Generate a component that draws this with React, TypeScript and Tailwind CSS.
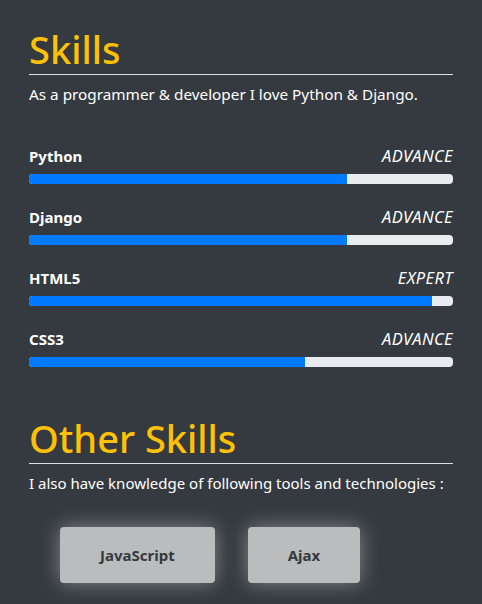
const SKILLS: { name: string; level: string; pct: number }[] = [
    { name: 'Python', level: 'ADVANCE', pct: 75 },
    { name: 'Django', level: 'ADVANCE', pct: 75 },
    { name: 'HTML5', level: 'EXPERT', pct: 95 },
    { name: 'CSS3', level: 'ADVANCE', pct: 65 },
]

const OTHER = ['JavaScript', 'Ajax']

function SectionTitle({ title }: { title: string }) {
    return (
        <div className="border-b border-[#dee2e6]">
            <h1 className="text-[38px] leading-[46px] font-medium text-[#ffc107] pb-[2px]">{title}</h1>
        </div>
    )
}

function SkillBar({ skill }: { skill: { name: string; level: string; pct: number } }) {
    return (
        <div className="flex flex-col gap-[7px]">
            <div className="flex flex-row items-end justify-between leading-[22px]">
                <span className="text-[15px] font-bold text-white">{skill.name}</span>
                <span className="text-[16.5px] italic tracking-[0.4px] text-white">{skill.level}</span>
            </div>
            <div className="h-[10px] w-full rounded-[4px] bg-[#e9ecef] overflow-hidden">
                <div className="h-full bg-[#007bff]" style={{ width: `${skill.pct}%` }} />
            </div>
        </div>
    )
}

export default function App() {
    return (
        <div className="min-h-[604px] w-[482px] bg-[#343a40] px-[29px] pt-[26px] font-['Noto_Sans',sans-serif]">
            <SectionTitle title="Skills" />
            <p className="mt-[8px] text-[15.3px] text-white">As a programmer &amp; developer I love Python &amp; Django.</p>

            <div className="mt-[39px] flex flex-col gap-[22px]">
                {SKILLS.map((s) => (
                    <SkillBar key={s.name} skill={s} />
                ))}
            </div>

            <div className="mt-[48px]">
                <SectionTitle title="Other Skills" />
                <p className="mt-[8px] text-[15px] text-white">I also have knowledge of following tools and technologies :</p>
            </div>

            <div className="mt-[33px] flex flex-row gap-[33px] pl-[31px]">
                {OTHER.map((t) => (
                    <div
                        key={t}
                        className="flex h-[56px] items-center justify-center rounded-[4px] bg-[#bbbcbe] px-[40px] text-[15px] font-bold text-[#343a40] shadow-[0_0_20px_rgba(255,255,255,0.4)]"
                    >
                        {t}
                    </div>
                ))}
            </div>
        </div>
    )
}
